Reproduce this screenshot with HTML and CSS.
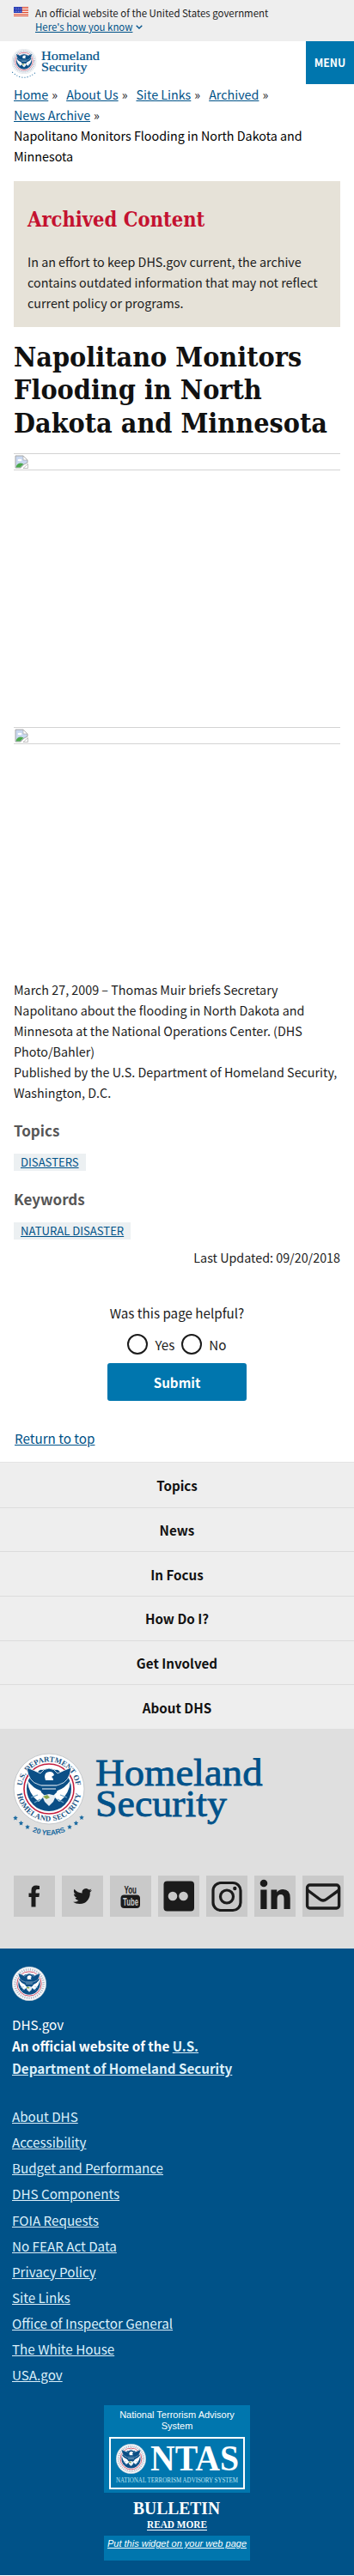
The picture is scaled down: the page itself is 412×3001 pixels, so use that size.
FILE: index.html
```
<!DOCTYPE html>
<html lang="en">
<head>
<meta charset="utf-8">
<title>Napolitano Monitors Flooding in North Dakota and Minnesota | Homeland Security</title>
<link rel="stylesheet" href="styles.css">
</head>
<body>
<svg class="defs" width="0" height="0" aria-hidden="true">
  <symbol id="emblem" viewBox="0 0 82 82">
    <circle cx="41" cy="41" r="29" fill="#fff" stroke="#c41f3e" stroke-width="1.6"/>
    <circle cx="41" cy="41" r="26" fill="#0b4f86"/>
    <path d="M17 27Q28 12 41 15q13-3 24 12-5-4-10-4-3-5-6-4-8-3-16 0-3-1-6 4-5 0-10 4z" fill="#fff"/>
    <path d="M15 16q8 3 16 7 4-6 10-6t10 6q8-4 16-7-2 17-14 20l-6 2H35l-6-2Q17 33 15 16z" fill="#0b4f86" stroke="#fff" stroke-width=".8"/>
    <path d="M16 31q6 9 15 12l5 6-7 7Q17 47 16 31zM66 31q-6 9-15 12l-5 6 7 7Q65 47 66 31z" fill="#fff"/>
    <path d="M36 27q0-6 6-6 4 0 5 4l-3 2q2 1 2 4H37z" fill="#fff"/>
    <path d="M32 35h18v10l-9 8-9-8z" fill="#0b4f86"/>
    <path d="M32 37h18M33 41h16" stroke="#fff" stroke-width="1"/>
    <path d="M33 49l8-2 8 2-3 7-5 5-5-5z" fill="#e8eef2"/>
    <path d="M34 50l5-2 3 3-4 2z" fill="#8aa84a"/>
    <path d="M20 51l8-3m-4 9l7-4m31-2l-8-3m4 9l-7-4" stroke="#6fa5c8" stroke-width="1.3"/>
  </symbol>
  <symbol id="seal" viewBox="0 0 82 82">
    <circle cx="41" cy="41" r="40.500" fill="#f6f8fa" stroke="#c6ccd2" stroke-width="1"/>
    <circle cx="41" cy="41" r="34" fill="none" stroke="#a9b4c6" stroke-width="5.500" stroke-dasharray="2.200 3"/>
    <use href="#emblem" width="82" height="82"/>
  </symbol>
  <symbol id="broken" viewBox="0 0 16 16">
    <path d="M1 1h9l5 5v3l-4 2-4 4H1z" fill="#c9d8f0" stroke="#a8a8a8"/>
    <path d="M10 1v5h5z" fill="#fff" stroke="#a8a8a8" stroke-width=".7"/>
    <ellipse cx="6" cy="6" rx="2.500" ry="1.300" fill="#fff"/>
    <path d="M1.500 14.500q1-5 6-5l3 1-4 4z" fill="#4ba84b"/>
    <path d="M15.500 10.500v5H10z" fill="#fff" stroke="#a8a8a8" stroke-width=".7"/>
  </symbol>
</svg>

<div class="banner">
  <svg class="flag" viewBox="0 0 16 11" preserveAspectRatio="none">
    <path fill="#fff" d="M0 0h16v11H0z"/>
    <path stroke="#db3e1f" stroke-width="1" d="M0 .5h16M0 2.500h16M0 4.500h16M0 6.500h16M0 8.500h16M0 10.500h16"/>
    <path fill="#1e33b1" d="M0 0h9v7H0z"/>
    <path stroke="#d6dcf5" stroke-width=".7" stroke-dasharray=".8 1" d="M1 1.500h7.500M1.500 3.500h7M1 5.500h7.500"/>
  </svg>
  <div class="banner-text">
    <p>An official website of the United States government</p>
    <p><a href="#">Here's how you know</a><svg class="chev" viewBox="0 0 8 5"><path d="M.7.700 4 4 7.300.700" fill="none" stroke="#00528a" stroke-width="1.300"/></svg></p>
  </div>
</div>

<header class="header">
  <div class="logo-small">
    <svg width="30" height="34" viewBox="0 0 84 96"><use href="#seal" x="1" width="82" height="82"/><path d="M3 76q39 36 78 0" fill="none" stroke="#1a6aa0" stroke-width="3" stroke-dasharray="3 6"/></svg>
    <svg width="70" height="34" viewBox="0 0 70 34" class="wordmark"><text x="0" y="13" textLength="68" lengthAdjust="spacingAndGlyphs">Homeland</text><text x="0" y="26" textLength="53.500" lengthAdjust="spacingAndGlyphs">Security</text></svg>
  </div>
  <button class="menu">MENU</button>
</header>

<main class="main">
  <nav class="crumbs">
    <div><a href="#">Home</a><span>»</span><a href="#">About Us</a><span>»</span><a href="#">Site Links</a><span>»</span><a href="#">Archived</a><span>»</span></div>
    <div><a href="#">News Archive</a><span>»</span></div>
    <p>Napolitano Monitors Flooding in North Dakota and<br>Minnesota</p>
  </nav>
  <section class="archived">
    <h2>Archived Content</h2>
    <p>In an effort to keep DHS.gov current, the archive<br>contains outdated information that may not reflect<br>current policy or programs.</p>
  </section>
  <h1>Napolitano Monitors<br>Flooding in North<br>Dakota and Minnesota</h1>
  <div class="photo"><svg width="16" height="16"><use href="#broken"/></svg></div>
  <div class="photo second"><svg width="16" height="16"><use href="#broken"/></svg></div>
  <p class="caption">March 27, 2009 – Thomas Muir briefs Secretary<br>Napolitano about the flooding in North Dakota and<br>Minnesota at the National Operations Center. (DHS<br>Photo/Bahler)<br>Published by the U.S. Department of Homeland Security,<br>Washington, D.C.</p>
  <h3>Topics</h3>
  <a class="tag" href="#">DISASTERS</a>
  <h3 class="keywords">Keywords</h3>
  <a class="tag" href="#">NATURAL DISASTER</a>
  <p class="updated">Last Updated: 09/20/2018</p>
  <form class="helpful">
    <p>Was this page helpful?</p>
    <div class="radios"><i></i><span>Yes</span><i></i><span>No</span></div>
    <button type="button">Submit</button>
  </form>
  <a class="top" href="#">Return to top</a>
</main>

<nav class="footnav">
  <a>Topics</a><a>News</a><a>In Focus</a><a>How Do I?</a><a>Get Involved</a><a>About DHS</a>
</nav>

<section class="brand">
  <div class="logo-large">
    <svg width="84" height="100" viewBox="0 0 84 100">
      <circle cx="42" cy="42" r="41" fill="#fff" stroke="#c6c9cc"/>
      <path id="arc-top" d="M10.500 42a31.500 31.500 0 0 1 63 0" fill="none"/>
      <path id="arc-bottom" d="M4.500 42a37.500 37.500 0 0 0 75 0" fill="none"/>
      <path id="arc-years" d="M2 78q40 36 80 0" fill="none"/>
      <g class="seal-text">
        <text><textPath href="#arc-top" startOffset="50%" text-anchor="middle" textLength="92">U.S. DEPARTMENT OF</textPath></text>
        <text><textPath href="#arc-bottom" startOffset="50%" text-anchor="middle" textLength="106">HOMELAND SECURITY</textPath></text>
      </g>
      <use href="#emblem" x="1" y="1" width="82" height="82"/>
      <text class="years"><textPath href="#arc-years" startOffset="50%" text-anchor="middle" textLength="40">20 YEARS</textPath></text>
      <g fill="#1a6aa0"><path id="star" d="M3 73l.8 1.800 2 .2-1.500 1.400.4 2L3 77.400l-1.700 1 .4-2L.2 75l2-.2z"/><use href="#star" x="6.500" y="6"/><use href="#star" x="14" y="10.500"/><use href="#star" x="77" y="-.5"/><use href="#star" x="70.500" y="6"/><use href="#star" x="63" y="10.500"/></g>
    </svg>
    <svg width="200" height="90" viewBox="0 0 200 90" class="wordmark big"><text x="0" y="38" textLength="194.500" lengthAdjust="spacingAndGlyphs">Homeland</text><text x="0" y="74" textLength="153" lengthAdjust="spacingAndGlyphs">Security</text></svg>
  </div>
  <div class="social">
    <svg viewBox="0 0 48 48"><path d="M30 12v4h-2.500q-2 0-2 2v2.500H30l-.6 4.500h-3.900v11.500H20.500V25H17.500v-4.500h3V17q0-5.500 5.700-5.500 2.300 0 3.800.5z"/></svg>
    <svg viewBox="0 0 48 48"><path d="M35 17q-1.200.6-2.500.7 1.300-.8 1.800-2.300-1.300.8-2.800 1.100A4.600 4.600 0 0 0 23.600 20.500q-5.500-.3-9.100-4.700-1.800 3.700 1.400 6-1 0-2-.5.200 3.400 3.500 4.400-1 .3-2 .1 1.100 3 4.100 3.100-2.800 2.200-6.500 1.900 3.300 2.300 7.700 2.300 6 0 9.500-4.600 3-3.900 2.500-9Q34.200 18.300 35 17z"/></svg>
    <svg viewBox="0 0 48 48"><g class="yt"><text x="16.500" y="20.500" font-size="12" textLength="14.500" lengthAdjust="spacingAndGlyphs">You</text><rect x="12.500" y="22.500" width="22.500" height="15.500" rx="4"/><text x="15" y="35" font-size="13" textLength="18" lengthAdjust="spacingAndGlyphs" fill="#c9c9c9">Tube</text></g></svg>
    <svg viewBox="0 0 48 48"><rect x="6.500" y="6.500" width="35.500" height="35" rx="4"/><circle cx="17" cy="24" r="5.300" fill="#c9c9c9"/><circle cx="29.500" cy="24" r="5.300" fill="#c9c9c9"/></svg>
    <svg viewBox="0 0 48 48"><rect x="8" y="8.500" width="32" height="32" rx="9" fill="none" stroke="#1b1b1b" stroke-width="3.200"/><circle cx="24" cy="24.500" r="7.500" fill="none" stroke="#1b1b1b" stroke-width="3.200"/><circle cx="33.300" cy="15" r="2.200"/></svg>
    <svg viewBox="0 0 48 48"><circle cx="11" cy="9" r="4.300"/><path d="M7.300 16.500h7.200V39H7.300zM19.500 16.500h6.800v3q2.200-3.500 7-3.500 8.400 0 8.400 10V39h-7.200V27q0-5-3.600-5-4.300 0-4.300 5v12h-7.100z"/></svg>
    <svg viewBox="0 0 48 48"><rect x="5.600" y="11" width="37" height="27" rx="3" fill="none" stroke="#1b1b1b" stroke-width="3.400"/><path d="M6 17l14 10.500q4 3 8 0L42.500 17" fill="none" stroke="#1b1b1b" stroke-width="3.400"/></svg>
  </div>
</section>

<footer class="footer">
  <svg width="40" height="40"><use href="#seal"/></svg>
  <p class="site">DHS.gov</p>
  <p class="official">An official website of the <a href="#">U.S.<br>Department of Homeland Security</a></p>
  <ul>
    <li><a href="#">About DHS</a></li><li><a href="#">Accessibility</a></li><li><a href="#">Budget and Performance</a></li><li><a href="#">DHS Components</a></li><li><a href="#">FOIA Requests</a></li><li><a href="#">No FEAR Act Data</a></li><li><a href="#">Privacy Policy</a></li><li><a href="#">Site Links</a></li><li><a href="#">Office of Inspector General</a></li><li><a href="#">The White House</a></li><li><a href="#">USA.gov</a></li>
  </ul>
  <div class="ntas">
    <div class="ntas-top">
      <p>National Terrorism Advisory<br>System</p>
      <svg width="158" height="61" viewBox="0 0 158 61">
        <rect x="1" y="1" width="156" height="59" fill="none" stroke="#fff" stroke-width="2"/>
        <use href="#seal" x="8" y="8" width="35" height="35"/>
        <g class="ntas-text"><text x="48" y="39" font-size="42" font-weight="bold" textLength="103" lengthAdjust="spacingAndGlyphs">NTAS</text>
        <text x="8" y="52.500" font-size="7.500" textLength="142" lengthAdjust="spacingAndGlyphs" fill="#bfe3f2">NATIONAL TERRORISM ADVISORY SYSTEM</text></g>
      </svg>
    </div>
    <svg width="170" height="50" viewBox="0 0 170 50"><g class="ntas-text"><text x="34" y="25" font-size="22" font-weight="bold" textLength="101" lengthAdjust="spacingAndGlyphs">BULLETIN</text><text x="50" y="41" font-size="12" font-weight="bold" textLength="70" lengthAdjust="spacingAndGlyphs">READ MORE</text></g><path d="M50 43.500h70" stroke="#fff"/></svg>
    <div class="ntas-bottom"><a href="#">Put this widget on your web page</a></div>
  </div>
</footer>
</body>
</html>
```

FILE: styles.css
```
* { box-sizing: border-box; }
body {
  margin: 0;
  background: #fff;
  color: #1b1b1b;
  font: 15.200px/24px "Noto Sans CJK SC", sans-serif;
  white-space: nowrap;
}
p, h1, h2, h3, ul { margin: 0; padding: 0; }
a { color: #005288; text-decoration: underline; }
svg { display: block; overflow: visible; }
.defs { position: absolute; }

.banner { height: 48px; background: #eee; padding: 8px 16px; display: flex; gap: 8px; }
.flag { width: 17px; height: 11px; }
.banner-text { font-size: 11.450px; line-height: 16px; margin-top: -1px; }
.banner-text p { display: flex; align-items: center; gap: 4px; height: 16px; }
.chev { width: 8px; height: 5px; }

.header { height: 50px; display: flex; justify-content: space-between; align-items: flex-start; }
.logo-small { display: flex; gap: 5px; padding: 9px 0 0 13px; }
.wordmark { font-family: "Liberation Serif", serif; font-size: 15px; fill: #00528a; stroke: #00528a; stroke-width: .2; }
.wordmark.big { font-size: 45px; stroke-width: .8; }
.menu { width: 56px; height: 50px; border: 0; padding: 0; background: #0076ae; color: #fff; font: bold 12.300px/50px "Noto Sans CJK SC", sans-serif; }

.main { padding: 0 16px; height: 1605px; }
.crumbs { height: 112.500px; font-size: 14.320px; }
.crumbs span { margin: 0 10px 0 4px; }
.crumbs p { color: #000; }
.archived { height: 170px; padding: 28px 16px 0; background: #e6e2d8; font-size: 14.320px; }
.archived h2 { color: #c41230; font: bold 23.500px/34px "DejaVu Serif Condensed", "DejaVu Serif", serif; height: 54px; }
h1 { height: 147.500px; padding-top: 16px; color: #111; font: bold 32px/38.600px "DejaVu Serif Condensed", "DejaVu Serif", serif; }
.photo { height: 20px; border: solid #d3d3d3; border-width: 1px 0; padding: 1px; }
.photo.second { margin-top: 299px; }
.caption { margin-top: 274px; height: 144px; font-size: 14.320px; }
h3 { color: #565656; font-size: 17px; line-height: 24px; margin-top: 20px; height: 39px; }
h3.keywords { margin-top: 21px; }
.tag { display: block; width: max-content; height: 20px; padding: 0 8px; background: #ecf0f2; font-size: 13.100px; line-height: 20px; }
.updated { text-align: right; margin-top: 9px; font-size: 14.320px; }
.helpful { display: flex; flex-direction: column; align-items: center; margin-top: 40px; }
.radios { display: flex; align-items: center; height: 24px; margin-top: 13px; }
.radios i { width: 24px; height: 24px; border: 2px solid #1b1b1b; border-radius: 50%; }
.radios span { margin: 0 8px; }
.radios span:last-child { margin-right: 0; }
.helpful button { width: 162px; height: 44px; margin-top: 10px; border: 0; border-radius: 3px; background: #0076ae; color: #fff; font: bold 15.200px/44px "Noto Sans CJK SC", sans-serif; padding: 0; }
.top { display: block; margin: 31px 0 0 1px; width: max-content; }

.footnav { height: 311px; background: #eee; border-top: 1px solid #e4e4e4; display: grid; grid-template-rows: repeat(6, 1fr); }
.footnav a { display: flex; align-items: center; justify-content: center; color: #111; font-weight: bold; text-decoration: none; }
.footnav a + a { border-top: 1px solid #dcdcdc; }

.brand { height: 256px; background: #dfdfdf; padding: 28px 0 0 15px; }
.logo-large { display: flex; gap: 12px; height: 143px; }
.social { display: flex; gap: 8px; padding: 0 0 0 1px; }
.social svg { width: 48px; height: 48px; background: #c9c9c9; fill: #1b1b1b; }
.yt { font-family: "Liberation Sans Narrow", "Liberation Sans", sans-serif; font-weight: bold; }
.seal-text { font: bold 8.800px "Liberation Serif", serif; fill: #1a5484; }
.years { font: bold 8.500px "Liberation Sans", sans-serif; fill: #1a6aa0; }

.footer { height: 730px; background: #005288; color: #fff; padding: 21px 14px 0; }
.footer a { color: #dcf0fa; }
.site { margin-top: 15px; height: 24px; }
.official { font-weight: bold; line-height: 26px; height: 83px; }
ul { list-style: none; }
li { height: 30.150px; }
.ntas { width: 170px; margin: 17.500px auto 0; text-align: center; font: 11px/13px "Liberation Sans", sans-serif; }
.ntas-top, .ntas-bottom { background: #0076ae; }
.ntas-top { height: 102px; padding: 5px 6px 0; }
.ntas-top p { height: 32px; }
.ntas-text { font-family: "Liberation Serif", serif; fill: #fff; }
.ntas-bottom { height: 29px; padding-top: 3px; font-style: italic; }
.ntas .ntas-bottom a { color: #fff; }
```
